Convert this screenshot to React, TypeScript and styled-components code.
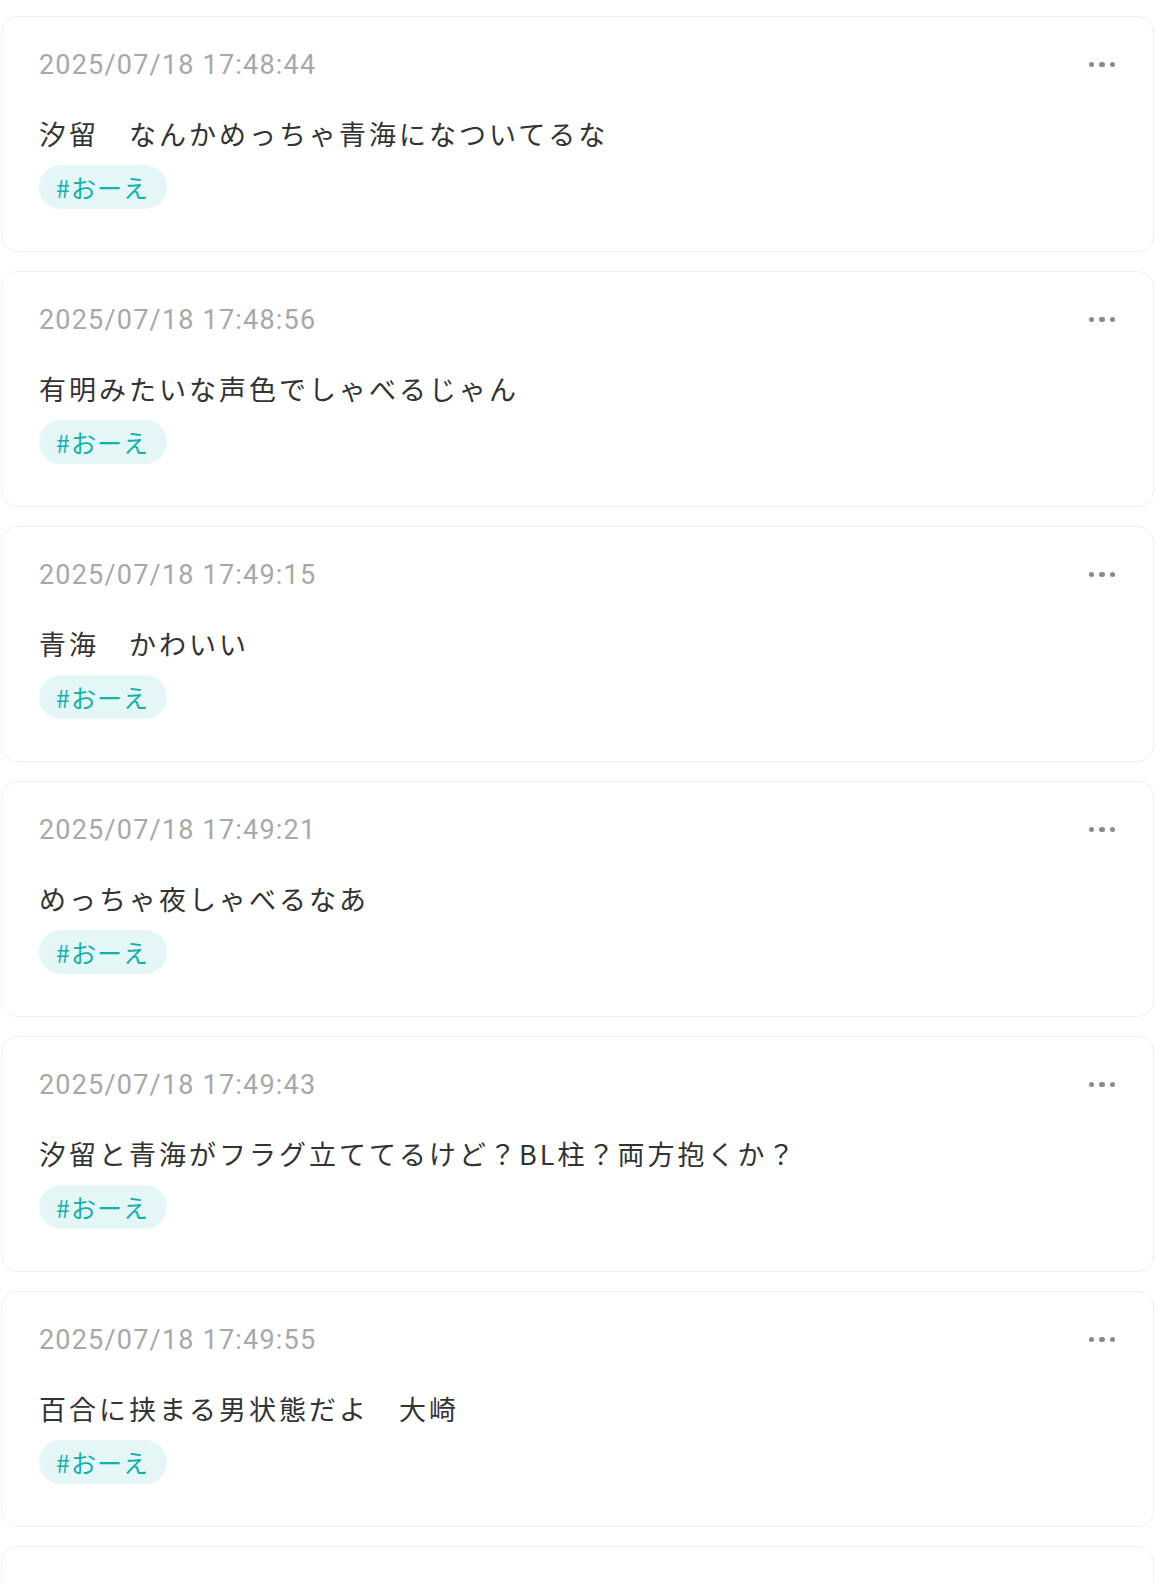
import styled, { createGlobalStyle } from 'styled-components'

// ── Global ─────────────────────────────────────────────────────────────────────

const GlobalStyle = createGlobalStyle`
  html, body {
    margin: 0;
    padding: 0;
    background: #ffffff;
  }

  body {
    font-family: "Noto Sans CJK JP", "Noto Sans", sans-serif;
    color: #333333;
  }

  * {
    box-sizing: border-box;
  }
`

// ── Feed ───────────────────────────────────────────────────────────────────────

const Feed = styled.main`
  display: flex;
  flex-direction: column;
  gap: 19px;
  padding: 16px 2px 0 1px;
`

const Card = styled.article`
  background: #ffffff;
  border: 1.5px solid #f0f0f0;
  border-radius: 16px;
  padding: 29.5px 38px 42.5px 37px;
  display: flex;
  flex-direction: column;
`

const CardHeader = styled.header`
  display: flex;
  align-items: center;
  justify-content: space-between;
  height: 36px;
`

const Timestamp = styled.time`
  font-family: Roboto, "Noto Sans", sans-serif;
  font-size: 27px;
  color: #a8a8a8;
  letter-spacing: 1.2px;
`

const MoreButton = styled.button`
  display: flex;
  align-items: center;
  gap: 5px;
  padding: 0;
  border: none;
  background: none;
  cursor: pointer;
`

const Dot = styled.span`
  width: 5.5px;
  height: 5.5px;
  border-radius: 50%;
  background: #8a8a8a;
`

const Body = styled.p`
  margin: 33.5px 0 0;
  font-size: 27px;
  line-height: 36px;
  letter-spacing: 3px;
  color: #333333;
`

const Tags = styled.div`
  display: flex;
  gap: 12px;
  margin-top: 12.5px;
`

const Tag = styled.span`
  display: inline-flex;
  align-items: center;
  height: 44px;
  padding: 0 18px 0 17px;
  border-radius: 22px;
  background: #e4f6f6;
  color: #13b1ae;
  font-size: 25px;
  letter-spacing: 1px;
`

// ── Data ───────────────────────────────────────────────────────────────────────

const POSTS = [
  { time: '2025/07/18 17:48:44', text: '汐留　なんかめっちゃ青海になついてるな' },
  { time: '2025/07/18 17:48:56', text: '有明みたいな声色でしゃべるじゃん' },
  { time: '2025/07/18 17:49:15', text: '青海　かわいい' },
  { time: '2025/07/18 17:49:21', text: 'めっちゃ夜しゃべるなあ' },
  { time: '2025/07/18 17:49:43', text: '汐留と青海がフラグ立ててるけど？BL柱？両方抱くか？' },
  { time: '2025/07/18 17:49:55', text: '百合に挟まる男状態だよ　大崎' },
  { time: '2025/07/18 17:50:08', text: '' },
]

// ── Page ───────────────────────────────────────────────────────────────────────

export default function App() {
  return (
    <>
      <GlobalStyle />
      <Feed>
        {POSTS.map(p => (
          <Card key={p.time}>
            <CardHeader>
              <Timestamp>{p.time}</Timestamp>
              <MoreButton aria-label="more">
                <Dot />
                <Dot />
                <Dot />
              </MoreButton>
            </CardHeader>
            <Body>{p.text}</Body>
            <Tags>
              <Tag>#おーえ</Tag>
            </Tags>
          </Card>
        ))}
      </Feed>
    </>
  )
}
